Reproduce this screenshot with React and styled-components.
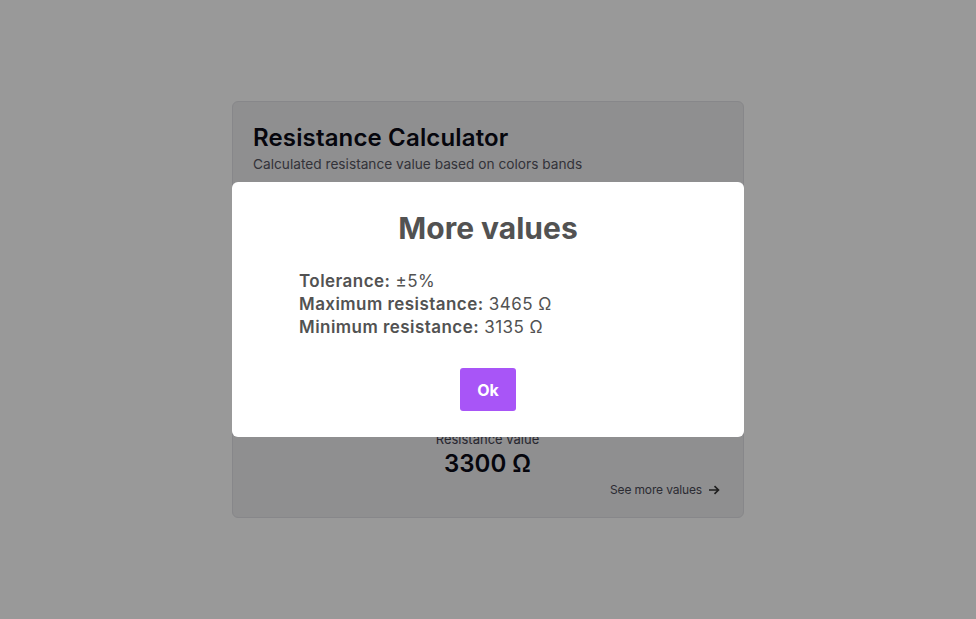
import styled, { createGlobalStyle } from "styled-components";

const Global = createGlobalStyle`
  html, body { margin: 0; padding: 0; }
  body {
    background: #ffffff;
    font-family: Inter, "Noto Sans", "Liberation Sans", sans-serif;
  }
`;

const Page = styled.div`
  width: 976px;
  height: 619px;
  display: flex;
  align-items: center;
  justify-content: center;
`;

const Card = styled.div`
  width: 512px;
  height: 417px;
  box-sizing: border-box;
  background: #eeeef0;
  border: 1px solid #e2e2e6;
  border-radius: 6px;
  padding: 20px 21px 20px 20px;
  display: flex;
  flex-direction: column;
`;

const Title = styled.h1`
  margin: 0;
  font-size: 24px;
  line-height: 32px;
  font-weight: 600;
  color: #0b0b16;
  letter-spacing: 0.15px;
`;

const Subtitle = styled.p`
  margin: 0;
  font-size: 13.7px;
  line-height: 20px;
  color: #555560;
`;

const Body = styled.div`
  flex: 1;
`;

const Result = styled.div`
  display: flex;
  flex-direction: column;
  align-items: center;
`;

const ResultLabel = styled.span`
  font-size: 13px;
  line-height: 18px;
  color: #444450;
`;

const ResultValue = styled.span`
  font-size: 24px;
  line-height: 32px;
  font-weight: 600;
  color: #0b0b16;
`;

const MoreLink = styled.a`
  align-self: flex-end;
  margin-top: 2px;
  margin-right: 2px;
  display: flex;
  align-items: center;
  gap: 6px;
  font-size: 12px;
  letter-spacing: -0.15px;
  color: #4a4a55;
  cursor: pointer;
`;

const Overlay = styled.div`
  position: fixed;
  inset: 0;
  background: rgba(0, 0, 0, 0.4);
  display: flex;
  align-items: center;
  justify-content: center;
`;

const Modal = styled.div`
  width: 512px;
  height: 255px;
  box-sizing: border-box;
  background: #ffffff;
  border-radius: 6px;
  padding: 26px 67px 26px;
  display: flex;
  flex-direction: column;
  color: #525252;
`;

const ModalTitle = styled.h2`
  margin: 0 0 22px;
  text-align: center;
  font-size: 30px;
  line-height: 40px;
  font-weight: 700;
`;

const List = styled.ul`
  list-style: none;
  margin: 0;
  padding: 0;
  font-size: 17px;
  line-height: 23px;
  letter-spacing: 0.45px;
`;

const Item = styled.li`
  b { font-weight: 600; }
`;

const OkButton = styled.button`
  align-self: center;
  margin-top: auto;
  width: 56px;
  height: 43px;
  border: none;
  border-radius: 3px;
  background: #a855f7;
  color: #ffffff;
  font-family: inherit;
  font-size: 16px;
  font-weight: 700;
  cursor: pointer;
`;

const Arrow = () => (
  <svg width="12" height="10" viewBox="0 0 12 10" fill="none">
    <path d="M1 5h9.5M6.5 1.2L10.5 5l-4 3.8" stroke="#333" strokeWidth="1.6" />
  </svg>
);

export default function App() {
  return (
    <>
      <Global />
      <Page>
        <Card>
          <Title>Resistance Calculator</Title>
          <Subtitle>Calculated resistance value based on colors bands</Subtitle>
          <Body />
          <Result>
            <ResultLabel>Resistance value</ResultLabel>
            <ResultValue>3300 Ω</ResultValue>
          </Result>
          <MoreLink>
            See more values <Arrow />
          </MoreLink>
        </Card>
      </Page>
      <Overlay>
        <Modal>
          <ModalTitle>More values</ModalTitle>
          <List>
            <Item><b>Tolerance:</b> ±5%</Item>
            <Item><b>Maximum resistance:</b> 3465 Ω</Item>
            <Item><b>Minimum resistance:</b> 3135 Ω</Item>
          </List>
          <OkButton>Ok</OkButton>
        </Modal>
      </Overlay>
    </>
  );
}
